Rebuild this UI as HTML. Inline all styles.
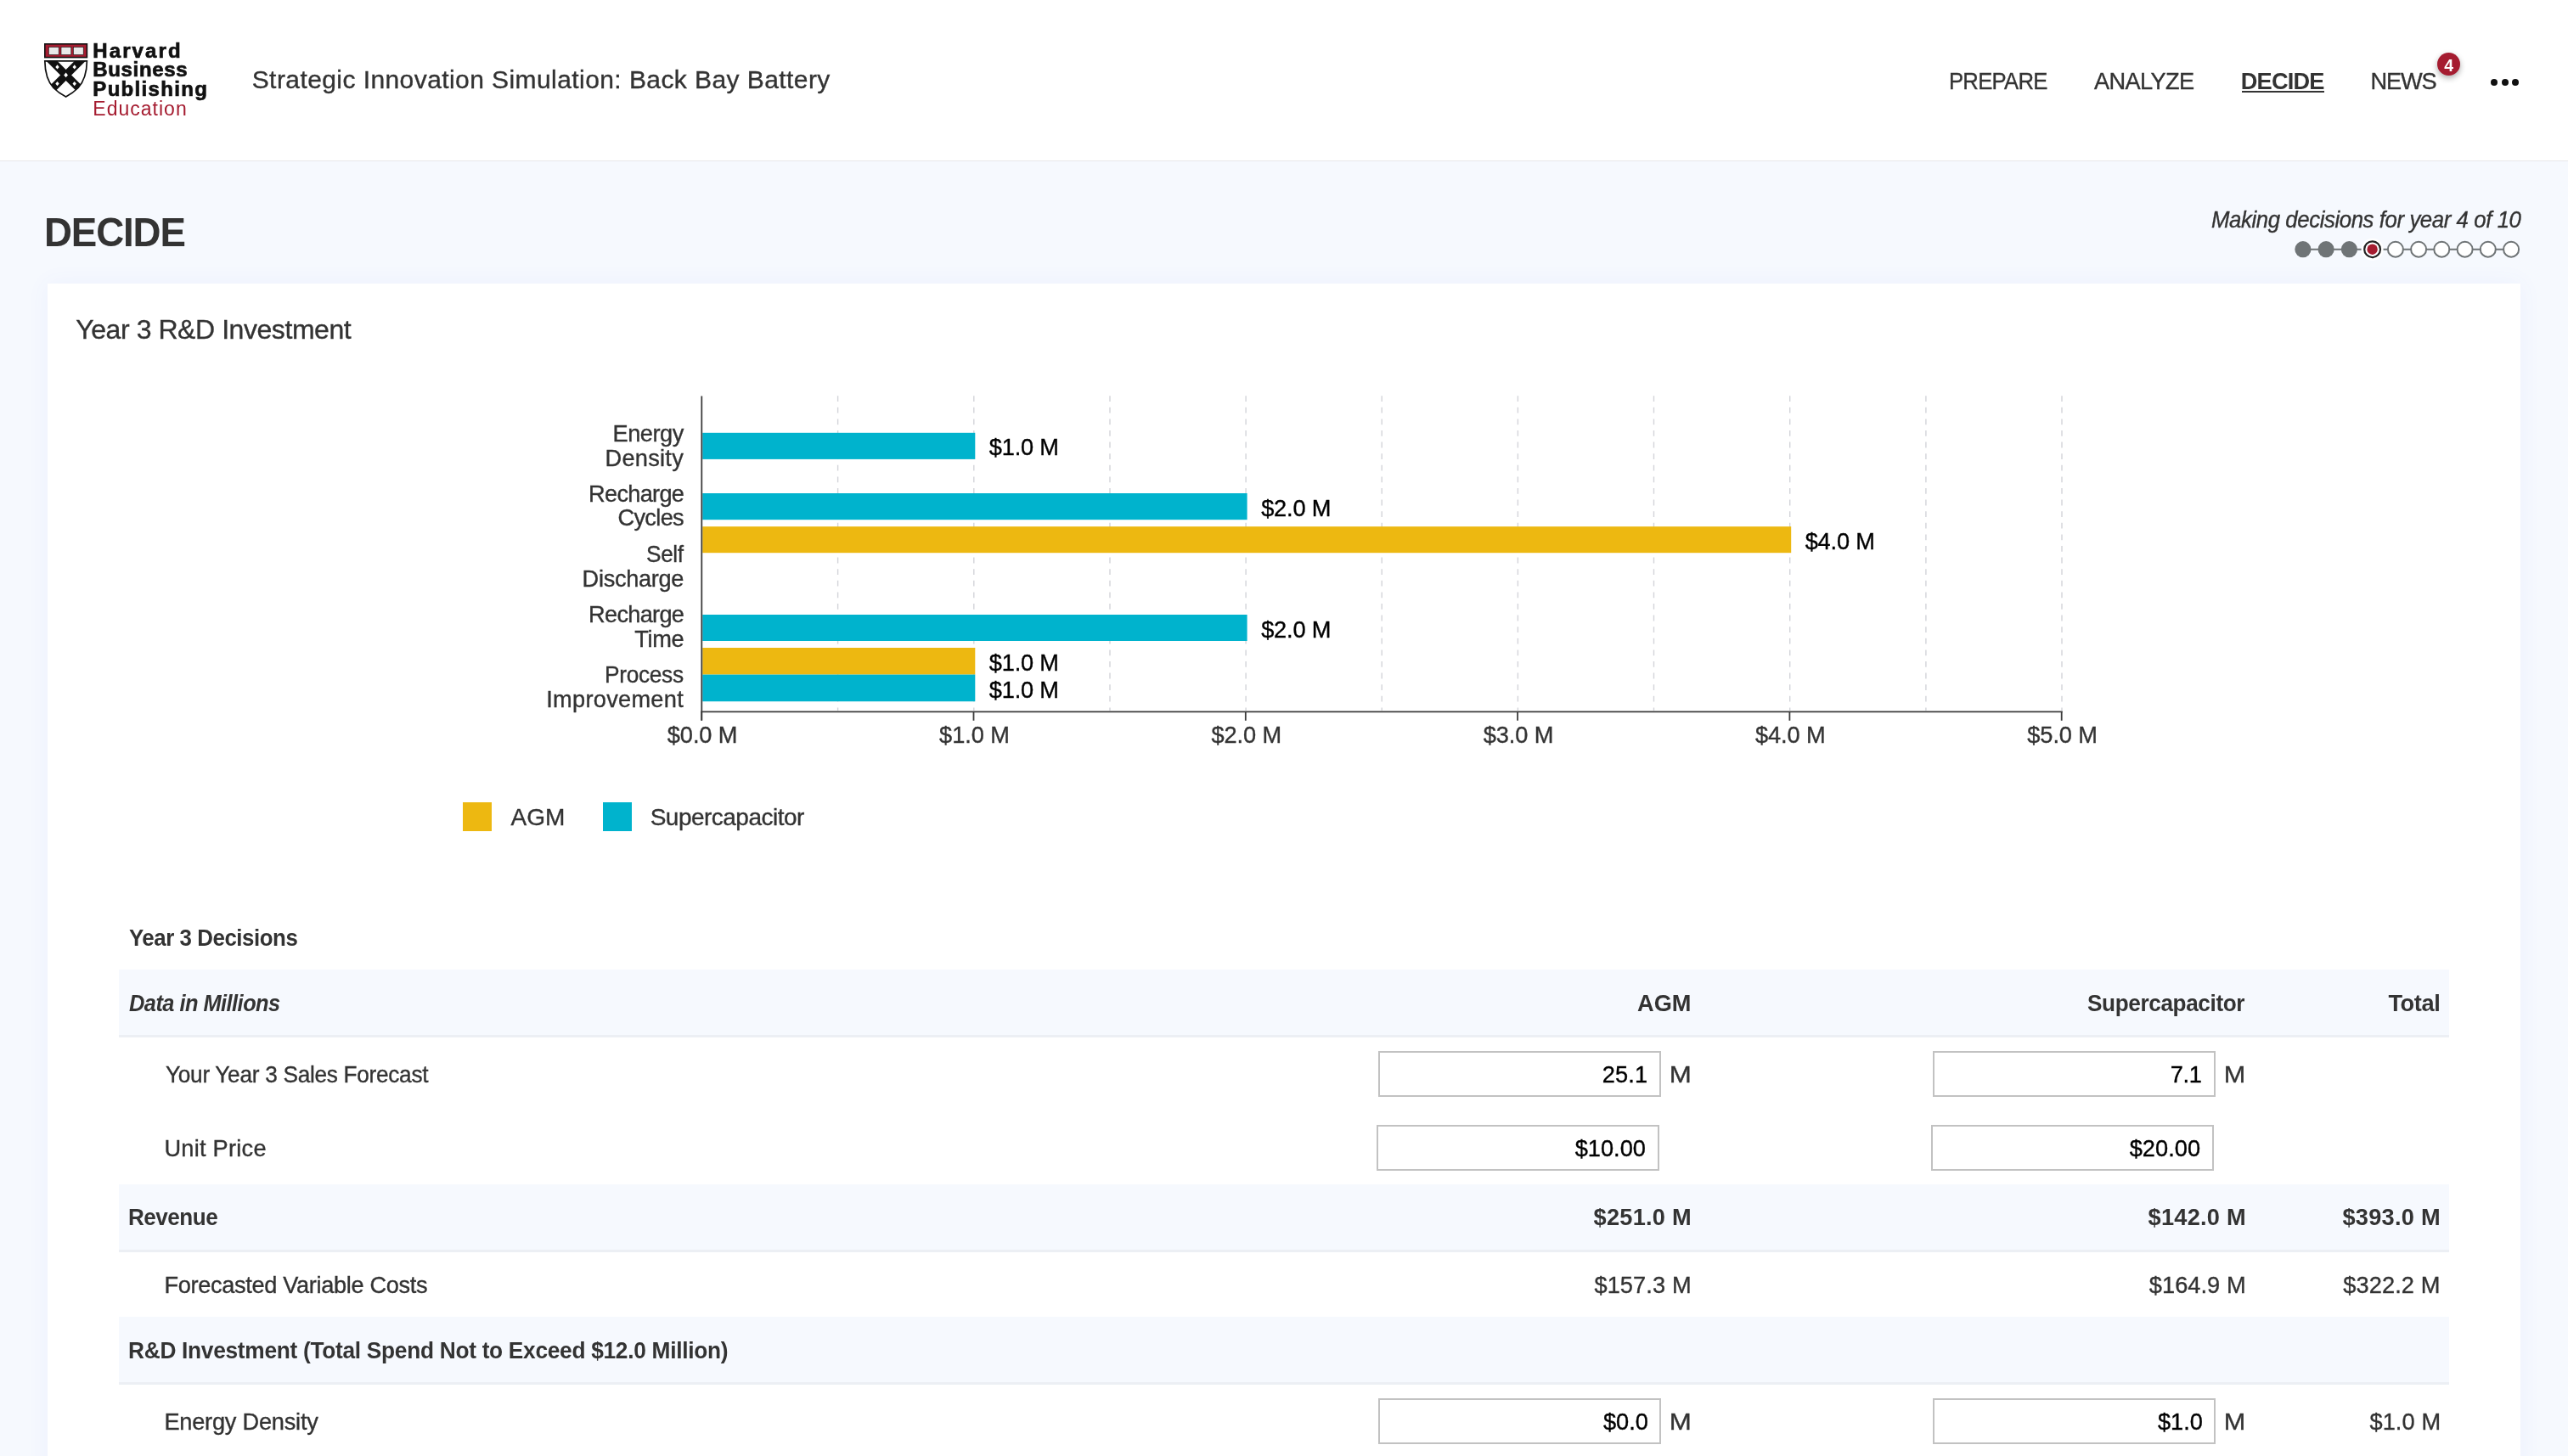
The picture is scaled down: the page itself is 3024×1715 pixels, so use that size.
<!DOCTYPE html>
<html lang="en"><head><meta charset="utf-8"><title>Strategic Innovation Simulation: Back Bay Battery</title>
<style>
*{box-sizing:border-box}
html,body{margin:0;padding:0}
body{width:3024px;height:1715px;overflow:hidden;position:relative;background:#f6f9fe;font-family:"Liberation Sans",sans-serif;color:#333}
.t{position:absolute;white-space:pre;line-height:1;margin:0;font-weight:400;-webkit-text-stroke-width:.35px}
.lg{-webkit-text-stroke:0.7px #111}
main{position:absolute;left:0;top:0;width:3024px;height:1715px;will-change:transform}
header{will-change:transform;z-index:2;position:absolute;left:0;top:0;width:3024px;height:190px;background:#fff;border-bottom:1px solid #e7e8ea}
.shield{position:absolute;left:50.6px;top:49.9px}
.chart{position:absolute;left:0;top:0}
.ul{position:absolute;left:2639.5px;top:106.5px;width:97.5px;height:2px;background:#333}
.badge{position:absolute;left:2870.1px;top:62.3px;width:27px;height:27px;border-radius:50%;background:#a51c30;box-shadow:0 3px 7px rgba(0,0,0,.32)}
.more{position:absolute;top:92.8px;width:8px;height:8px;border-radius:50%;background:#111}
.card{position:absolute;left:56px;top:334px;width:2912px;height:1500px;background:#fff;box-shadow:0 0 26px rgba(80,110,255,.06)}
.sq{position:absolute;top:945.2px;width:34px;height:33.6px}
.hrow{position:absolute;left:140px;width:2744px;background:#f6f9fe;border-bottom:3px solid #eceff4}
.inp{position:absolute;background:#fff;border:2px solid #c2c2c2}
</style></head>
<body>
<header>
<svg class="shield" width="56" height="68" viewBox="0 0 56 68">
<rect x="1" y="1" width="51.2" height="17.4" fill="#111"/>
<rect x="2.6" y="2.6" width="48" height="14.2" fill="#a51c30"/>
<g fill="#e9e9e9" stroke="#111" stroke-width="0.6"><rect x="6.4" y="5.5" width="11.8" height="9"/><rect x="21" y="5.5" width="11.8" height="9"/><rect x="35.4" y="5.5" width="11.8" height="9"/></g>
<defs><clipPath id="sh"><path d="M1.8 21.8 H51.4 C51.2 36 48 46 41 53.5 C36 58.6 31 61.6 26.6 64 C22 61.6 17 58.6 12 53.5 C5 46 2 36 1.8 21.8 Z"/></clipPath></defs>
<path d="M1.8 21.8 H51.4 C51.2 36 48 46 41 53.5 C36 58.6 31 61.6 26.6 64 C22 61.6 17 58.6 12 53.5 C5 46 2 36 1.8 21.8 Z" fill="#fff" stroke="#111" stroke-width="1.7"/>
<g clip-path="url(#sh)" stroke="#111" stroke-width="9.2" stroke-linecap="butt"><line x1="5.1" y1="17" x2="44.1" y2="56"/><line x1="48.1" y1="17" x2="9.1" y2="56"/></g>
<g fill="#fff"><path d="M16.5 26.3l2.2 2.6-2.2 2.6-2.2-2.6z"/><path d="M36.7 26.3l2.2 2.6-2.2 2.6-2.2-2.6z"/><path d="M26.6 35.6l2.4 2.8-2.4 2.8-2.4-2.8z"/><path d="M16.5 46l2.2 2.6-2.2 2.6-2.2-2.6z"/><path d="M36.7 46l2.2 2.6-2.2 2.6-2.2-2.6z"/></g>
</svg>
<span class="t lg" style="left:109.3px;top:47.7px;font-size:24px;letter-spacing:2.100px;font-weight:700;color:#111;">Harvard</span>
<span class="t lg" style="left:109.3px;top:69.6px;font-size:24px;letter-spacing:0.657px;font-weight:700;color:#111;">Business</span>
<span class="t lg" style="left:109.3px;top:92.5px;font-size:24px;letter-spacing:1.322px;font-weight:700;color:#111;">Publishing</span>
<span class="t" style="left:109.3px;top:116.6px;font-size:23px;letter-spacing:1.013px;color:#a51c30;-webkit-text-stroke-width:0;">Education</span>
<div class="t" style="left:296.7px;top:78.7px;font-size:30px;letter-spacing:0.423px;">Strategic Innovation Simulation: Back Bay Battery</div>
<nav>
<a class="t" style="left:2294.6px;top:81.5px;font-size:27.2px;letter-spacing:-0.789px;transform:scaleX(0.944);transform-origin:0.0px 50%;">PREPARE</a>
<a class="t" style="left:2466.0px;top:81.5px;font-size:27.2px;letter-spacing:-0.633px;">ANALYZE</a>
<a class="t" style="left:2638.8px;top:81.5px;font-size:27.2px;letter-spacing:-0.840px;font-weight:700;-webkit-text-stroke-width:0;">DECIDE</a>
<a class="t" style="left:2791.5px;top:81.5px;font-size:27.2px;letter-spacing:-1.167px;">NEWS</a>
<div class="ul"></div>
<div class="badge"></div>
<span class="t" style="left:2878.3px;top:67.9px;font-size:19.5px;font-weight:700;-webkit-text-stroke-width:0;color:#fff;">4</span>
<div class="more" style="left:2933.1px"></div><div class="more" style="left:2945.6px"></div><div class="more" style="left:2958px"></div>
</nav>
</header>
<main>
<h1 class="t" style="left:52.4px;top:250.1px;font-size:48px;letter-spacing:-1.173px;font-weight:700;-webkit-text-stroke-width:0;transform:scaleX(0.951);transform-origin:0.0px 50%;">DECIDE</h1>
<span class="t" style="left:2604.1px;top:244.6px;font-size:27.2px;letter-spacing:-0.438px;font-style:italic;transform:scaleX(0.948);transform-origin:0.0px 50%;">Making decisions for year 4 of 10</span>
<svg class="chart" width="3024" height="1715" viewBox="0 0 3024 1715"><line x1="2711.9" y1="293.7" x2="2957.06" y2="293.7" stroke="#6f7476" stroke-width="2"/><circle cx="2711.9" cy="293.7" r="9.6" fill="#6f7476"/><circle cx="2739.1" cy="293.7" r="9.6" fill="#6f7476"/><circle cx="2766.4" cy="293.7" r="9.6" fill="#6f7476"/><circle cx="2793.6" cy="293.7" r="13" fill="#fff"/><circle cx="2793.6" cy="293.7" r="9.4" fill="#fff" stroke="#222" stroke-width="2.2"/><circle cx="2793.6" cy="293.7" r="6.2" fill="#a51c30"/><circle cx="2820.9" cy="293.7" r="9" fill="#fff" stroke="#6f7476" stroke-width="2"/><circle cx="2848.1" cy="293.7" r="9" fill="#fff" stroke="#6f7476" stroke-width="2"/><circle cx="2875.3" cy="293.7" r="9" fill="#fff" stroke="#6f7476" stroke-width="2"/><circle cx="2902.6" cy="293.7" r="9" fill="#fff" stroke="#6f7476" stroke-width="2"/><circle cx="2929.8" cy="293.7" r="9" fill="#fff" stroke="#6f7476" stroke-width="2"/><circle cx="2957.1" cy="293.7" r="9" fill="#fff" stroke="#6f7476" stroke-width="2"/></svg>
<section class="card"></section>
<h2 class="t" style="left:89.3px;top:372.1px;font-size:32px;letter-spacing:-0.440px;">Year 3 R&amp;D Investment</h2>
<svg class="chart" width="3024" height="1715" viewBox="0 0 3024 1715">
<g stroke="#d3d4d9" stroke-width="1.4" stroke-dasharray="6.8 6.8" fill="none"><line x1="986.6" y1="466.2" x2="986.6" y2="837" /><line x1="1146.8" y1="466.2" x2="1146.8" y2="837" /><line x1="1307.0" y1="466.2" x2="1307.0" y2="837" /><line x1="1467.1" y1="466.2" x2="1467.1" y2="837" /><line x1="1627.2" y1="466.2" x2="1627.2" y2="837" /><line x1="1787.4" y1="466.2" x2="1787.4" y2="837" /><line x1="1947.5" y1="466.2" x2="1947.5" y2="837" /><line x1="2107.7" y1="466.2" x2="2107.7" y2="837" /><line x1="2267.9" y1="466.2" x2="2267.9" y2="837" /><line x1="2428.0" y1="466.2" x2="2428.0" y2="837" /></g>
<rect x="827.3" y="509.8" width="321.0" height="31.1" fill="#00b3cd"/><rect x="827.3" y="581" width="641.3" height="31.2" fill="#00b3cd"/><rect x="827.3" y="620.2" width="1281.9" height="31.0" fill="#edb811"/><rect x="827.3" y="724" width="641.3" height="31.0" fill="#00b3cd"/><rect x="827.3" y="763" width="321.0" height="31.6" fill="#edb811"/><rect x="827.3" y="794.6" width="321.0" height="31.6" fill="#00b3cd"/>
<g stroke="#3c3c3c" stroke-width="1.8" fill="none"><line x1="826.3" y1="466.5" x2="826.3" y2="848.6"/><line x1="825.3" y1="838.3" x2="2428.7" y2="838.3"/><line x1="826.2" y1="838" x2="826.2" y2="848.8" /><line x1="1146.5" y1="838" x2="1146.5" y2="848.8" /><line x1="1466.8" y1="838" x2="1466.8" y2="848.8" /><line x1="1787.1" y1="838" x2="1787.1" y2="848.8" /><line x1="2107.4" y1="838" x2="2107.4" y2="848.8" /><line x1="2427.7" y1="838" x2="2427.7" y2="848.8" /></g>
</svg>
<span class="t" style="left:721.5px;top:496.6px;font-size:27.2px;letter-spacing:-0.480px;">Energy</span>
<span class="t" style="left:712.5px;top:525.6px;font-size:27.2px;letter-spacing:0.267px;">Density</span>
<span class="t" style="left:693.1px;top:567.8px;font-size:27.2px;letter-spacing:-0.714px;">Recharge</span>
<span class="t" style="left:727.5px;top:596.4px;font-size:27.2px;letter-spacing:-0.680px;">Cycles</span>
<span class="t" style="left:760.8px;top:639.1px;font-size:27.2px;letter-spacing:-0.367px;transform:scaleX(0.964);transform-origin:0.0px 50%;">Self</span>
<span class="t" style="left:685.6px;top:667.8px;font-size:27.2px;letter-spacing:-0.312px;">Discharge</span>
<span class="t" style="left:693.1px;top:710.4px;font-size:27.2px;letter-spacing:-0.714px;">Recharge</span>
<span class="t" style="left:747.3px;top:739.2px;font-size:27.2px;letter-spacing:-0.400px;">Time</span>
<span class="t" style="left:712.3px;top:781.3px;font-size:27.2px;letter-spacing:-0.346px;transform:scaleX(0.968);transform-origin:0.0px 50%;">Process</span>
<span class="t" style="left:643.2px;top:810.4px;font-size:27.2px;letter-spacing:0.290px;">Improvement</span>
<span class="t" style="left:1164.8px;top:513.4px;font-size:27.2px;letter-spacing:-0.200px;color:#000;">$1.0 M</span>
<span class="t" style="left:1485.2px;top:584.8px;font-size:27.2px;letter-spacing:-0.200px;color:#000;">$2.0 M</span>
<span class="t" style="left:2125.7px;top:623.8px;font-size:27.2px;letter-spacing:-0.200px;color:#000;">$4.0 M</span>
<span class="t" style="left:1485.2px;top:727.7px;font-size:27.2px;letter-spacing:-0.200px;color:#000;">$2.0 M</span>
<span class="t" style="left:1164.8px;top:767.0px;font-size:27.2px;letter-spacing:-0.200px;color:#000;">$1.0 M</span>
<span class="t" style="left:1164.8px;top:798.8px;font-size:27.2px;letter-spacing:-0.200px;color:#000;">$1.0 M</span>
<span class="t" style="left:785.8px;top:851.8px;font-size:27.2px;letter-spacing:-0.080px;">$0.0 M</span>
<span class="t" style="left:1106.1px;top:851.8px;font-size:27.2px;letter-spacing:-0.080px;">$1.0 M</span>
<span class="t" style="left:1426.4px;top:851.8px;font-size:27.2px;letter-spacing:-0.080px;">$2.0 M</span>
<span class="t" style="left:1746.7px;top:851.8px;font-size:27.2px;letter-spacing:-0.080px;">$3.0 M</span>
<span class="t" style="left:2067.0px;top:851.8px;font-size:27.2px;letter-spacing:-0.080px;">$4.0 M</span>
<span class="t" style="left:2387.3px;top:851.8px;font-size:27.2px;letter-spacing:-0.080px;">$5.0 M</span>
<div class="sq" style="left:545.1px;background:#edb811"></div><div class="sq" style="left:709.8px;background:#00b3cd"></div>
<span class="t" style="left:601.6px;top:948.9px;font-size:28px;letter-spacing:-0.050px;">AGM</span>
<span class="t" style="left:765.7px;top:948.9px;font-size:28px;letter-spacing:-0.515px;">Supercapacitor</span>
<h3 class="t" style="left:151.5px;top:1091.3px;font-size:27.2px;letter-spacing:-0.473px;font-weight:700;-webkit-text-stroke-width:0;transform:scaleX(0.951);transform-origin:0.0px 50%;">Year 3 Decisions</h3>
<div class="hrow" style="top:1142px;height:80px"></div>
<div class="hrow" style="top:1395.3px;height:79.7px"></div>
<div class="hrow" style="top:1551px;height:80px"></div>
<div class="inp" style="left:1623px;top:1238px;width:333.0px;height:54.0px"></div><div class="inp" style="left:2276px;top:1238px;width:333.0px;height:54.0px"></div>
<div class="inp" style="left:1621px;top:1325px;width:333.0px;height:54.0px"></div><div class="inp" style="left:2274px;top:1325px;width:333.0px;height:54.0px"></div>
<div class="inp" style="left:1623px;top:1647px;width:333.0px;height:54.0px"></div><div class="inp" style="left:2276px;top:1647px;width:333.0px;height:54.0px"></div>
<span class="t" style="left:151.5px;top:1167.5px;font-size:27.2px;letter-spacing:-0.585px;font-weight:700;-webkit-text-stroke-width:0;font-style:italic;transform:scaleX(0.935);transform-origin:0.0px 50%;">Data in Millions</span>
<span class="t" style="left:1928.1px;top:1167.8px;font-size:27.2px;letter-spacing:-0.050px;font-weight:700;-webkit-text-stroke-width:0;">AGM</span>
<span class="t" style="left:2458.0px;top:1167.8px;font-size:27.2px;letter-spacing:-0.389px;font-weight:700;-webkit-text-stroke-width:0;transform:scaleX(0.962);transform-origin:0.0px 50%;">Supercapacitor</span>
<span class="t" style="left:2812.4px;top:1167.8px;font-size:27.2px;letter-spacing:-0.375px;font-weight:700;-webkit-text-stroke-width:0;">Total</span>
<span class="t" style="left:195.0px;top:1251.8px;font-size:27.2px;letter-spacing:-0.309px;transform:scaleX(0.965);transform-origin:0.0px 50%;">Your Year 3 Sales Forecast</span>
<span class="t" style="left:1886.8px;top:1251.7px;font-size:27.2px;letter-spacing:0.133px;color:#000;">25.1</span>
<span class="t" style="left:1965.8px;top:1251.7px;font-size:27.2px;transform:scaleX(1.147);transform-origin:2.0px 50%;">M</span>
<span class="t" style="left:2555.8px;top:1251.7px;font-size:27.2px;letter-spacing:-0.300px;color:#000;">7.1</span>
<span class="t" style="left:2619.4px;top:1251.7px;font-size:27.2px;transform:scaleX(1.126);transform-origin:2.0px 50%;">M</span>
<span class="t" style="left:193.4px;top:1338.5px;font-size:27.2px;letter-spacing:0.256px;">Unit Price</span>
<span class="t" style="left:1854.7px;top:1339.0px;font-size:27.2px;letter-spacing:0.020px;color:#000;">$10.00</span>
<span class="t" style="left:2507.7px;top:1339.0px;font-size:27.2px;letter-spacing:0.060px;color:#000;">$20.00</span>
<span class="t" style="left:150.8px;top:1420.0px;font-size:27.2px;letter-spacing:-0.517px;font-weight:700;-webkit-text-stroke-width:0;transform:scaleX(0.959);transform-origin:0.0px 50%;">Revenue</span>
<span class="t" style="left:1876.6px;top:1420.0px;font-size:27.2px;letter-spacing:0.229px;font-weight:700;-webkit-text-stroke-width:0;">$251.0 M</span>
<span class="t" style="left:2529.6px;top:1420.0px;font-size:27.2px;letter-spacing:0.229px;font-weight:700;-webkit-text-stroke-width:0;">$142.0 M</span>
<span class="t" style="left:2758.5px;top:1420.0px;font-size:27.2px;letter-spacing:0.243px;font-weight:700;-webkit-text-stroke-width:0;">$393.0 M</span>
<span class="t" style="left:193.4px;top:1499.5px;font-size:27.2px;letter-spacing:-0.342px;">Forecasted Variable Costs</span>
<span class="t" style="left:1877.4px;top:1499.7px;font-size:27.2px;letter-spacing:0.114px;">$157.3 M</span>
<span class="t" style="left:2530.8px;top:1499.7px;font-size:27.2px;letter-spacing:0.057px;">$164.9 M</span>
<span class="t" style="left:2759.3px;top:1499.7px;font-size:27.2px;letter-spacing:0.100px;">$322.2 M</span>
<span class="t" style="left:150.8px;top:1577.3px;font-size:27.2px;letter-spacing:-0.303px;font-weight:700;-webkit-text-stroke-width:0;transform:scaleX(0.967);transform-origin:0.0px 50%;">R&amp;D Investment (Total Spend Not to Exceed $12.0 Million)</span>
<span class="t" style="left:193.4px;top:1660.7px;font-size:27.2px;letter-spacing:-0.223px;">Energy Density</span>
<span class="t" style="left:1888.0px;top:1660.8px;font-size:27.2px;color:#000;">$0.0</span>
<span class="t" style="left:1965.8px;top:1660.8px;font-size:27.2px;transform:scaleX(1.147);transform-origin:2.0px 50%;">M</span>
<span class="t" style="left:2541.0px;top:1660.8px;font-size:27.2px;color:#000;">$1.0</span>
<span class="t" style="left:2619.4px;top:1660.8px;font-size:27.2px;transform:scaleX(1.126);transform-origin:2.0px 50%;">M</span>
<span class="t" style="left:2790.4px;top:1660.8px;font-size:27.2px;letter-spacing:0.120px;">$1.0 M</span>
</main>
</body></html>
